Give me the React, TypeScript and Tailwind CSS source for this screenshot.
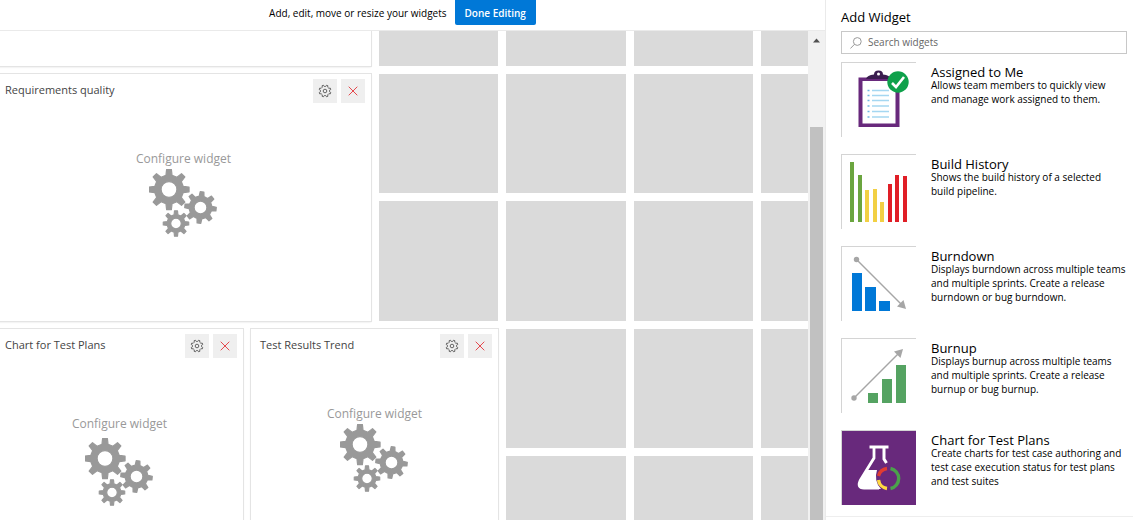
import type { ReactNode } from "react";

function gearPath(cx: number, cy: number, outer: number, inner: number, hole: number, turn = 0): string {
  const teeth = 8;
  const step = (Math.PI * 2) / teeth;
  const points: string[] = [];
  const add = (radius: number, angle: number) => {
    points.push(`${(cx + radius * Math.cos(angle)).toFixed(2)} ${(cy + radius * Math.sin(angle)).toFixed(2)}`);
  };
  for (let i = 0; i < teeth; i++) {
    const a = i * step + turn;
    add(inner, a - step * 0.27);
    add(outer, a - step * 0.15);
    add(outer, a + step * 0.15);
    add(inner, a + step * 0.27);
  }
  const ring = `M${cx - hole} ${cy}a${hole} ${hole} 0 1 0 ${hole * 2} 0a${hole} ${hole} 0 1 0 ${-hole * 2} 0Z`;
  return `M${points.join("L")}Z${ring}`;
}

const gearsPath =
  gearPath(21, 20.5, 20.2, 14.6, 7.9) + gearPath(52.5, 38.5, 15.8, 11.4, 6.4, 0.1) + gearPath(28, 54.5, 12.8, 9, 5.3);
const settingsPath = gearPath(7, 7, 6, 4.7, 1.8, 0.39);

function Gears() {
  return (
    <svg width="70" height="69" viewBox="1 0 70 69" aria-hidden="true">
      <path d={gearsPath} fill="#999" fillRule="evenodd" stroke="#999" strokeWidth="1.2" strokeLinejoin="round" />
    </svg>
  );
}

type WidgetProps = { title: string; className: string; bodyClass: string };

function Widget({ title, className, bodyClass }: WidgetProps) {
  return (
    <section className={`flex flex-col bg-white shadow-[0_0_0_1px_#e4e4e4,0_1px_2px_#ddd] ${className}`}>
      <header className="flex items-start justify-between pt-[5px] pr-1.5 pl-[9px]">
        <h2 className="text-[11px] leading-[22px] text-[#444]">{title}</h2>
        <div className="flex gap-1">
          <button type="button" aria-label={`Configure ${title}`} className="flex size-6 items-center justify-center bg-[#efefef]">
            <svg width="14" height="14" viewBox="0 0 14 14" aria-hidden="true">
              <path d={settingsPath} fill="none" stroke="#666" strokeWidth="1" strokeLinejoin="round" />
            </svg>
          </button>
          <button type="button" aria-label={`Remove ${title}`} className="flex size-6 items-center justify-center bg-[#efefef]">
            <svg width="10" height="10" viewBox="0 0 10 10" aria-hidden="true">
              <path d="M.7.7l8.6 8.6M9.3.7L.7 9.3" stroke="#e5484d" strokeWidth="1" />
            </svg>
          </button>
        </div>
      </header>
      <div className={`flex flex-col items-center ${bodyClass}`}>
        <p className="text-[12px] leading-4 text-[#999]">Configure widget</p>
        <Gears />
      </div>
    </section>
  );
}

function Bars({ bars, fill }: { bars: number[][]; fill: string }) {
  return (
    <>
      {bars.map(([x, y, w, h]) => (
        <rect key={x} x={x} y={y} width={w} height={h} fill={fill} />
      ))}
    </>
  );
}

const art: Record<string, ReactNode> = {
  assigned: (
    <>
      <rect x="19" y="17" width="39" height="47" fill="#fff" />
      <path d="M17.5 15.5H58.5V65H17.5ZM21.5 19V61.5H54.5V19Z" fill="#68297c" fillRule="evenodd" />
      <path d="M25 17q1-4 8-4.5 0-4 4.5-4t4.5 4q7 .5 8 4.5Z" fill="#3a1d4f" />
      <circle cx="37.5" cy="12" r="1.5" fill="#fff" />
      <path d="M26.5 28.5h2M26.5 33.5h2M26.5 38.5h2M26.5 44h2M26.5 49.5h2M26.5 55h2" stroke="#6db8e3" strokeWidth="1.3" />
      <path d="M31 28.5h17M31 33.5h17M31 38.5h17M31 44h17M31 49.5h17M31 55h17" stroke="#a5d7f1" strokeWidth="1.3" />
      <circle cx="57" cy="20" r="10.7" fill="#0fa14b" />
      <path d="M51 21l4 4 8-10" fill="none" stroke="#fff" strokeWidth="2.6" />
    </>
  ),
  build: (
    <>
      <Bars fill="#6ba53f" bars={[[9, 8, 4, 60], [17, 21, 4, 47]]} />
      <Bars fill="#f2d044" bars={[[24, 36, 4, 32], [32, 35, 4, 33], [39, 48, 4, 20]]} />
      <Bars fill="#e01e26" bars={[[47, 30, 4, 38], [54, 21, 4, 47], [62, 22, 4, 46]]} />
    </>
  ),
  burndown: (
    <>
      <Bars fill="#0078d7" bars={[[11, 27, 10, 38], [24, 41, 11, 24], [38, 55, 11, 10]]} />
      <path d="M15.5 13.5L61 59" stroke="#a6a6a6" strokeWidth="1.4" />
      <circle cx="15.5" cy="13.5" r="2.7" fill="#a6a6a6" />
      <path d="M65 63L56 60.5 62.5 54Z" fill="#a6a6a6" />
    </>
  ),
  burnup: (
    <>
      <Bars fill="#55a362" bars={[[27, 55, 10, 10], [41, 41, 10, 24], [55, 27, 10, 38]]} />
      <path d="M13 60L58 15" stroke="#a6a6a6" strokeWidth="1.4" />
      <circle cx="13" cy="60" r="2.7" fill="#a6a6a6" />
      <path d="M62 11L59.5 20 53 13.5Z" fill="#a6a6a6" />
    </>
  ),
  plans: (
    <>
      <rect x="0" y="0" width="75" height="75" fill="#68297c" />
      <path d="M28.5 17h19" stroke="#fff" strokeWidth="3" />
      <path d="M33 18V28L19.5 50q-4 8 3.5 8H38" fill="none" stroke="#fff" strokeWidth="2.8" />
      <path d="M43 18V29l2.5 4" fill="none" stroke="#fff" strokeWidth="3" />
      <path d="M26 40H36q-3.5 11 4 19H22q-6-1-4-6Z" fill="#fff" />
      <g fill="none" strokeWidth="3.4">
        <path d="M37.5 46a10 10 0 0 1 8.5-7.5" stroke="#e03c31" />
        <path d="M37.5 50a10 10 0 0 0 8.5 8.5" stroke="#ffd940" />
        <path d="M49.5 38.5a10.2 10.2 0 0 1 0 20" stroke="#4ba24b" />
      </g>
    </>
  ),
};

const catalog = [
  { id: "assigned", name: "Assigned to Me", text: "Allows team members to quickly view and\u00a0manage work assigned to them." },
  { id: "build", name: "Build History", text: "Shows the build history of a selected build pipeline." },
  { id: "burndown", name: "Burndown", text: "Displays burndown across multiple teams and multiple sprints. Create a release burndown or bug burndown." },
  { id: "burnup", name: "Burnup", text: "Displays burnup across multiple teams and multiple sprints. Create a release burnup or bug burnup." },
  { id: "plans", name: "Chart for Test Plans", text: "Create charts for test case authoring and test case execution status for test plans and test suites" },
];

const emptyTiles = Array.from({ length: 18 }, (_, i) => i);

export default function App() {
  return (
    <div className="flex h-screen overflow-hidden bg-white font-['Open_Sans','Noto_Sans',sans-serif] text-black">
      <main className="flex min-w-0 flex-1 flex-col">
        <div className="flex h-[31px] shrink-0 items-start justify-center gap-2 border-b border-[#eaeaea] pr-5">
          <p className="text-[10px] leading-[26px]">Add, edit, move or resize your widgets</p>
          <button type="button" className="h-[25px] rounded-b-xs bg-[#0078d7] px-2.5 text-[10px] leading-[26px] font-semibold text-white">
            Done Editing
          </button>
        </div>
        <div className="flex min-h-0 flex-1">
          <div className="min-w-0 flex-1 overflow-hidden">
            <div className="grid grid-flow-row-dense grid-cols-[115px_120px_120px_119px_120px_119px_120px] grid-rows-[35px_119px_120px_119px_120px] gap-2">
              <section className="col-span-3 col-start-1 row-start-1 -ml-1 bg-white shadow-[0_0_0_1px_#e4e4e4,0_1px_2px_#ddd]" />
              <Widget title="Requirements quality" className="col-span-3 col-start-1 row-span-2 row-start-2 -ml-1" bodyClass="pt-[48px] gap-0.5" />
              <Widget title="Chart for Test Plans" className="col-span-2 col-start-1 row-span-2 row-start-4 -ml-1" bodyClass="pt-[58px] gap-1.5" />
              <Widget title="Test Results Trend" className="col-span-2 col-start-3 row-span-2 row-start-4" bodyClass="pt-[48px] gap-0.5" />
              {emptyTiles.map((i) => (
                <div key={i} className="bg-[#dadada]" />
              ))}
            </div>
          </div>
          <div className="flex w-[17px] shrink-0 flex-col items-center bg-[#f1f1f1]" aria-hidden="true">
            <svg width="17" height="17" viewBox="0 0 17 17">
              <path d="M5 11.5h7L8.5 7.5Z" fill="#505050" />
            </svg>
            <div className="mt-[79px] w-[13px] flex-1 bg-[#c1c1c1]" />
          </div>
        </div>
      </main>
      <aside className="w-[308px] shrink-0 border-l border-[#eaeaea] pt-2 pr-1.5 pl-[15px]">
        <h1 className="text-[13px] leading-[18px]">Add Widget</h1>
        <label className="mt-[5px] flex h-[23px] items-center gap-1.5 border border-[#c8c8c8] pl-2">
          <svg width="12" height="12" viewBox="0 0 12 12" fill="none" stroke="#999" aria-hidden="true">
            <circle cx="7.3" cy="4.5" r="3.9" />
            <path d="M4.5 7.3L.4 11.5" />
          </svg>
          <input
            type="search"
            aria-label="Search widgets"
            placeholder="Search widgets"
            className="min-w-0 flex-1 bg-transparent text-[10px] outline-none placeholder:text-[#666]"
          />
        </label>
        <ul className="mt-2 flex flex-col gap-[17px]">
          {catalog.map((item) => (
            <li key={item.id} className="flex h-[75px] gap-[15px]">
              <div className="size-[75px] shrink-0 border-t border-l border-[#d4d4d4]">
                <svg width="74" height="74" viewBox="1 1 74 74" aria-hidden="true">
                  {art[item.id]}
                </svg>
              </div>
              <div className="min-w-0 flex-1 pt-[3px]">
                <h2 className="text-[13px] leading-[14px]">{item.name}</h2>
                <p className="-mt-px text-[10px] leading-[14px]">{item.text}</p>
              </div>
            </li>
          ))}
        </ul>
        <div className="-mr-1.5 -ml-[15px] mt-[11px] border-t border-[#eee]" />
      </aside>
    </div>
  );
}
